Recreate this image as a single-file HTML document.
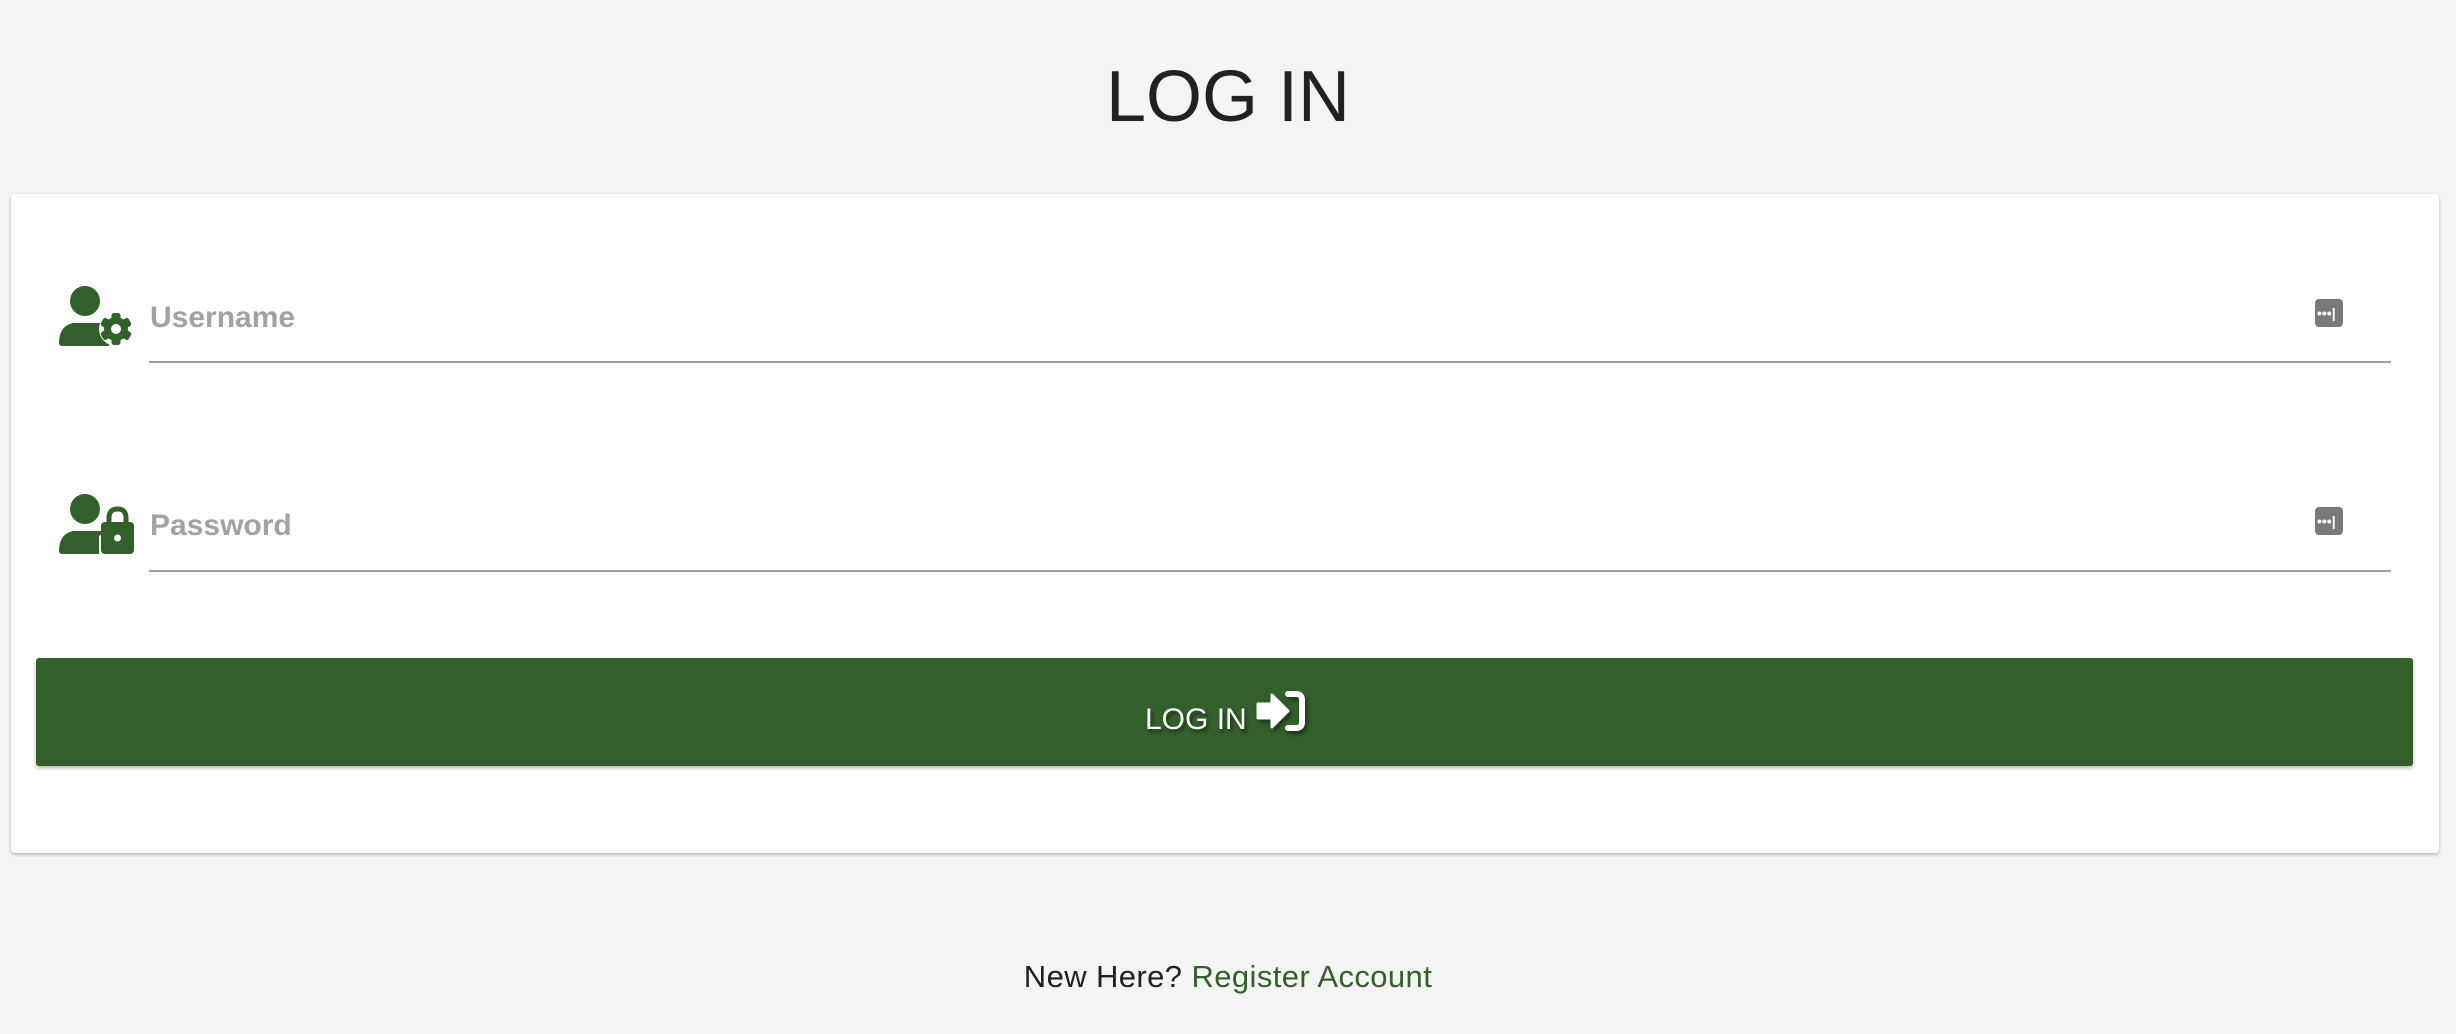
<!DOCTYPE html>
<html><head><meta charset="utf-8"><style>
html,body{margin:0;padding:0;width:2456px;height:1034px;background:#f4f4f4;overflow:hidden;font-family:"Liberation Sans",sans-serif}
.a{position:absolute}
h1{position:absolute;left:0;width:2456px;top:49px;margin:0;text-align:center;font-weight:400;font-size:72px;line-height:96px;color:#212121}
.card{left:11px;top:194px;width:2428px;height:659px;background:#fff;border-radius:4px;box-shadow:0 2px 3px rgba(0,0,0,.22),0 0 2px rgba(0,0,0,.08)}
.line{left:149px;width:2242px;height:2px;background:#9e9e9e}
.ph{left:150px;font-size:30px;color:#9e9e9e;font-weight:700;opacity:.95}
.key{width:28px;height:28px;border-radius:4px;background:#7a7a7a}
.btn{left:36px;top:658px;width:2377px;height:108px;background:#335f2a;border-radius:3px;box-shadow:0 2px 4px rgba(0,0,0,.3)}
.bt{color:#fff;font-size:30px;text-shadow:2px 3px 3px rgba(0,0,0,.45)}
.foot{left:0;width:2456px;top:955px;text-align:center;font-size:31px;letter-spacing:0.4px;color:#212121;line-height:44px}
.foot span{color:#335f2a}
</style></head><body>
<h1>LOG IN</h1>
<div class="a card"></div>

<svg class="a" style="left:59px;top:286px" width="76" height="62" viewBox="0 0 76 62">
<circle cx="26" cy="15" r="15" fill="#335f2a"/>
<path d="M0 57 Q0 40 14 37 L44 37 Q48 37 50 40 L50 60 L4 60 Q0 60 0 57Z" fill="#335f2a"/>
<g transform="translate(57,43)" fill="#335f2a">
<circle r="17" fill="#fff"/>
<circle r="12"/>
<rect x="-4.5" y="-16" width="9" height="32" rx="2.5"/>
<rect x="-4.5" y="-16" width="9" height="32" rx="2.5" transform="rotate(60)"/>
<rect x="-4.5" y="-16" width="9" height="32" rx="2.5" transform="rotate(120)"/>
<circle r="5" fill="#fff"/>
</g>
</svg>
<div class="a ph" style="top:301px">Username</div>
<div class="a key" style="left:2315px;top:299px"></div>
<div class="a" style="left:2317px;top:299px;color:#fff;font-size:14px;line-height:28px;font-weight:700">•••|</div>
<div class="a line" style="top:361px"></div>

<svg class="a" style="left:59px;top:494px" width="76" height="62" viewBox="0 0 76 62">
<circle cx="26" cy="15" r="15" fill="#335f2a"/>
<path d="M0 57 Q0 40 14 37 L44 37 Q48 37 40 42 L40 60 L4 60 Q0 60 0 57Z" fill="#335f2a"/>
<path d="M50 30 L50 24 Q50 15 58.5 15 Q67 15 67 24 L67 30" fill="none" stroke="#335f2a" stroke-width="5"/>
<rect x="42" y="28" width="33" height="32" rx="4" fill="#335f2a"/>
<circle cx="58.5" cy="44" r="3.5" fill="#fff"/>
</svg>
<div class="a ph" style="top:509px">Password</div>
<div class="a key" style="left:2315px;top:507px"></div>
<div class="a" style="left:2317px;top:507px;color:#fff;font-size:14px;line-height:28px;font-weight:700">•••|</div>
<div class="a line" style="top:570px"></div>

<div class="a btn"></div>
<div class="a bt" style="left:1145px;top:700px;line-height:40px">LOG IN</div>
<svg class="a" style="left:1256px;top:690px;filter:drop-shadow(2px 3px 2px rgba(0,0,0,.45))" width="52" height="44" viewBox="0 0 52 44">
<path d="M2 14 L16 14 L16 5 L32 21 L16 37 L16 28 L2 28Z" fill="#fff" stroke="#fff" stroke-width="3" stroke-linejoin="round"/>
<path d="M32 4 L40 4 Q46 4 46 10 L46 32 Q46 38 40 38 L32 38" fill="none" stroke="#fff" stroke-width="6" stroke-linecap="round"/>
</svg>

<div class="a foot">New Here? <span>Register Account</span></div>
</body></html>
